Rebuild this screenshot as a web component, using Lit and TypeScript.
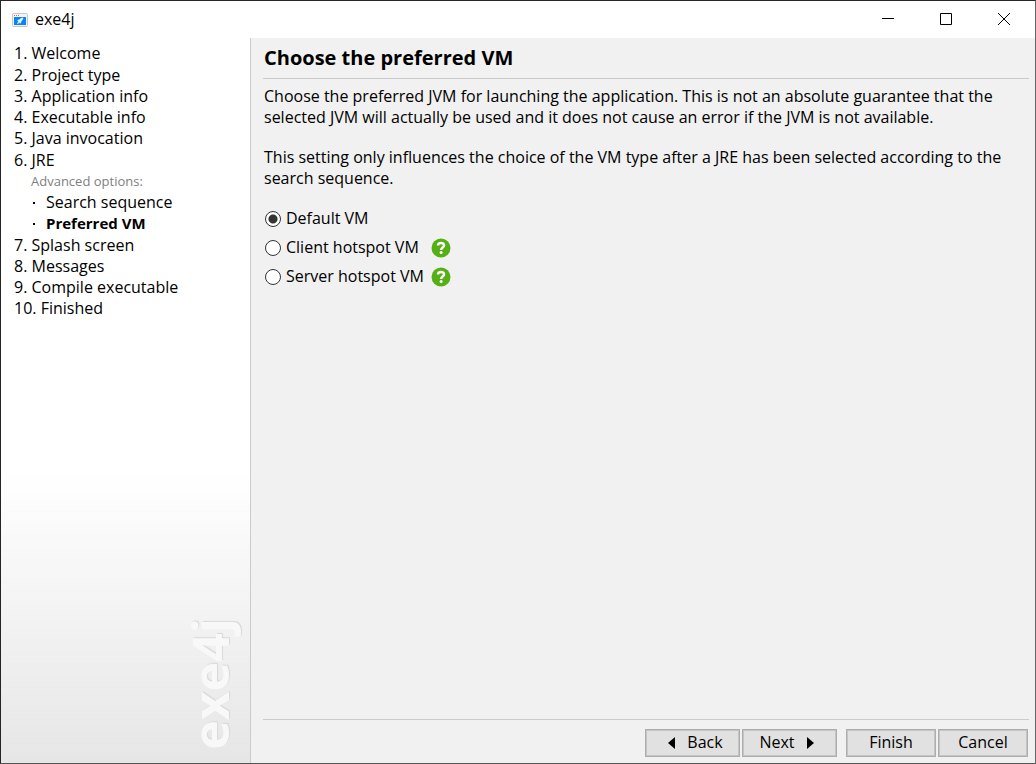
import { LitElement, html, css, svg } from "lit";
import { customElement, state } from "lit/decorators.js";

interface Step {
  label: string;
  children?: string[];
}

const STEP_GROUPS: Step[][] = [
  [{ label: "1. Welcome" }],
  [
    { label: "2. Project type" },
    { label: "3. Application info" },
    { label: "4. Executable info" },
    { label: "5. Java invocation" },
  ],
  [{ label: "6. JRE", children: ["Search sequence", "Preferred VM"] }],
  [
    { label: "7. Splash screen" },
    { label: "8. Messages" },
    { label: "9. Compile executable" },
    { label: "10. Finished" },
  ],
];

const VM_OPTIONS = [
  { id: "default", label: "Default VM", help: false },
  { id: "client", label: "Client hotspot VM", help: true },
  { id: "server", label: "Server hotspot VM", help: true },
];

const appIcon = svg`<svg width="16" height="14" viewBox="0 0 16 14" aria-hidden="true">
  <rect x="0.5" y="0.5" width="15" height="13" rx="1" fill="#f4f4f4" stroke="#c3c6ca"/>
  <path d="M2 2h1v1H2zM4 2h1v1H4zM6 2h1v1H6z" fill="#f0603c"/>
  <rect x="2" y="4" width="12" height="8" fill="#0a84f5"/>
  <path d="M11.2 4.600C9.600 4.600 8.400 5.400 7.600 6.600L6 6.800 5.200 8l1.300.1L5 10.800l.6.3L7.700 9.400l.2 1.300 1.200-.9.200-1.500c1.200-.8 1.900-2.100 1.900-3.700z" fill="#eaf4ff"/>
</svg>`;

@customElement("app-root")
export class AppRoot extends LitElement {
  @state() private selected = "default";

  static styles = css`
    :host {
      display: block;
      font: 16px/21px "Open Sans", "Noto Sans", sans-serif;
      color: #000;
    }
    *,
    *::before {
      box-sizing: border-box;
    }
    .window {
      display: flex;
      flex-direction: column;
      min-height: 100vh;
      border: 1px solid #262427;
      border-right-color: #666;
      border-bottom-color: #555;
      background: #fff;
    }
    .titlebar {
      display: flex;
      align-items: center;
      height: 37px;
      padding: 0 2px 0 11px;
    }
    .name {
      flex: 1;
      margin-left: 7px;
    }
    .control {
      display: grid;
      place-items: center;
      width: 58px;
      height: 35px;
      margin-bottom: 2px;
      padding: 0;
      border: 0;
      background: none;
    }
    .body {
      display: flex;
      flex: 1;
    }
    .sidebar {
      display: flex;
      flex-direction: column;
      justify-content: space-between;
      flex: none;
      width: 250px;
      border-right: 1px solid #cbcbcb;
      background: linear-gradient(#fff 60%, #e6e6e6);
    }
    .steps {
      display: flex;
      flex-direction: column;
      gap: 1px;
      padding: 5px 13px;
    }
    ul {
      margin: 0;
      padding: 0;
      list-style: none;
    }
    .sub {
      padding-left: 17px;
    }
    .caption {
      color: #808080;
      font-size: 13px;
    }
    .child {
      display: flex;
      align-items: center;
    }
    .child::before {
      content: "";
      width: 2px;
      height: 2px;
      margin: 0 11px 0 2px;
      background: #000;
    }
    .current {
      font-size: 15px;
      font-weight: 700;
    }
    .brand {
      align-self: flex-end;
      margin: 0 10px 13px 0;
      writing-mode: vertical-rl;
      transform: rotate(180deg);
      color: #f8f8f8;
      font: 700 50px/60px "Open Sans", sans-serif;
      text-shadow: 1px 1px 1px #d8d8d8;
    }
    .content {
      display: flex;
      flex: 1;
      flex-direction: column;
      min-width: 0;
      padding: 0 6px 6px 12px;
      background: #f1f1f1;
    }
    h1 {
      margin: 0;
      padding: 0 1px;
      border-bottom: 1px solid #cbcbcb;
      font-size: 20px;
      line-height: 40px;
    }
    .main {
      flex: 1;
      padding: 7px 1px;
    }
    p {
      margin: 0 0 19px;
    }
    .options {
      display: flex;
      flex-direction: column;
      gap: 8px;
      margin: 0;
      padding: 0;
      border: 0;
    }
    .option {
      display: flex;
      align-items: center;
      width: 187px;
      height: 21px;
    }
    .option label {
      flex: 1;
      margin-left: 5px;
    }
    .radio {
      appearance: none;
      width: 16px;
      height: 16px;
      margin: 0 0 0 1px;
      border: 1px solid #333;
      border-radius: 50%;
      background: #fff;
    }
    .radio:checked {
      background: radial-gradient(circle, #333 4px, #fff 5px);
    }
    .help {
      display: block;
      width: 20px;
      height: 20px;
      padding: 0;
      border: 0;
      background: none;
    }
    .footer {
      display: flex;
      justify-content: flex-end;
      gap: 2px;
      padding: 9px 1px 0;
      border-top: 1px solid #cbcbcb;
    }
    .button {
      display: flex;
      align-items: center;
      justify-content: center;
      gap: 12px;
      width: 90px;
      height: 28px;
      padding: 0 0 1px;
      border: 1px solid #adadad;
      outline: 1px solid #c4c4c4;
      outline-offset: -2px;
      background: #e1e1e1;
      color: #000;
      font: inherit;
    }
    .back {
      width: 95px;
      padding-left: 5px;
    }
    .next {
      width: 95px;
      padding-right: 5px;
    }
    .finish {
      margin-left: 7px;
    }
  `;

  private renderStep(step: Step) {
    return html`<li>
      ${step.label}
      ${step.children
        ? html`<div class="sub">
            <div class="caption">Advanced options:</div>
            <ul>
              ${step.children.map(
                (c) => html`<li class="child ${c === "Preferred VM" ? "current" : ""}">${c}</li>`
              )}
            </ul>
          </div>`
        : ""}
    </li>`;
  }

  render() {
    return html`
      <div class="window">
        <header class="titlebar">
          ${appIcon}
          <span class="name">exe4j</span>
          <button class="control" aria-label="Minimize">
            <svg width="12" height="12"><path d="M0 5.5h12" stroke="#000" /></svg>
          </button>
          <button class="control" aria-label="Maximize">
            <svg width="12" height="12"><path d="M.5.5h11v11H.5z" fill="none" stroke="#000" /></svg>
          </button>
          <button class="control" aria-label="Close">
            <svg width="12" height="12"><path d="M0 0l12 12M12 0L0 12" stroke="#000" /></svg>
          </button>
        </header>
        <div class="body">
          <nav class="sidebar" aria-label="Steps">
            <div class="steps">
              ${STEP_GROUPS.map((g) => html`<ul>${g.map((s) => this.renderStep(s))}</ul>`)}
            </div>
            <div class="brand">exe4j</div>
          </nav>
          <div class="content">
            <h1>Choose the preferred VM</h1>
            <main class="main">
              <p>
                Choose the preferred JVM for launching the application. This is not an absolute
                guarantee that the selected JVM will actually be used and it does not cause an
                error if the JVM is not available.
              </p>
              <p>
                This setting only influences the choice of the VM type after a JRE has been
                selected according to the search sequence.
              </p>
              <fieldset class="options" aria-label="Preferred VM">
                ${VM_OPTIONS.map(
                  (o) => html`<div class="option">
                    <input
                      class="radio"
                      type="radio"
                      name="vm"
                      id=${o.id}
                      .checked=${this.selected === o.id}
                      @change=${() => (this.selected = o.id)}
                    />
                    <label for=${o.id}>${o.label}</label>
                    ${o.help
                      ? html`<button class="help" aria-label="Help">
                          <svg width="20" height="20" viewBox="0 0 20 20">
                            <circle cx="10" cy="10" r="9.5" fill="#55b015" />
                            <path
                              d="M7 7.600C7 5.700 8.300 5 10 5s3 .9 3 2.600c0 2-2.900 2-2.900 4.400"
                              fill="none"
                              stroke="#fff"
                              stroke-width="2.500"
                            />
                            <circle cx="10.100" cy="14.500" r="1.500" fill="#fff" />
                          </svg>
                        </button>`
                      : ""}
                  </div>`
                )}
              </fieldset>
            </main>
            <footer class="footer">
              <button class="button back">
                <svg width="8" height="12"><path d="M8 0v12L1 6z" /></svg>Back
              </button>
              <button class="button next">
                Next<svg width="8" height="12"><path d="M0 0v12l7-6z" /></svg>
              </button>
              <button class="button finish">Finish</button>
              <button class="button">Cancel</button>
            </footer>
          </div>
        </div>
      </div>
    `;
  }
}
